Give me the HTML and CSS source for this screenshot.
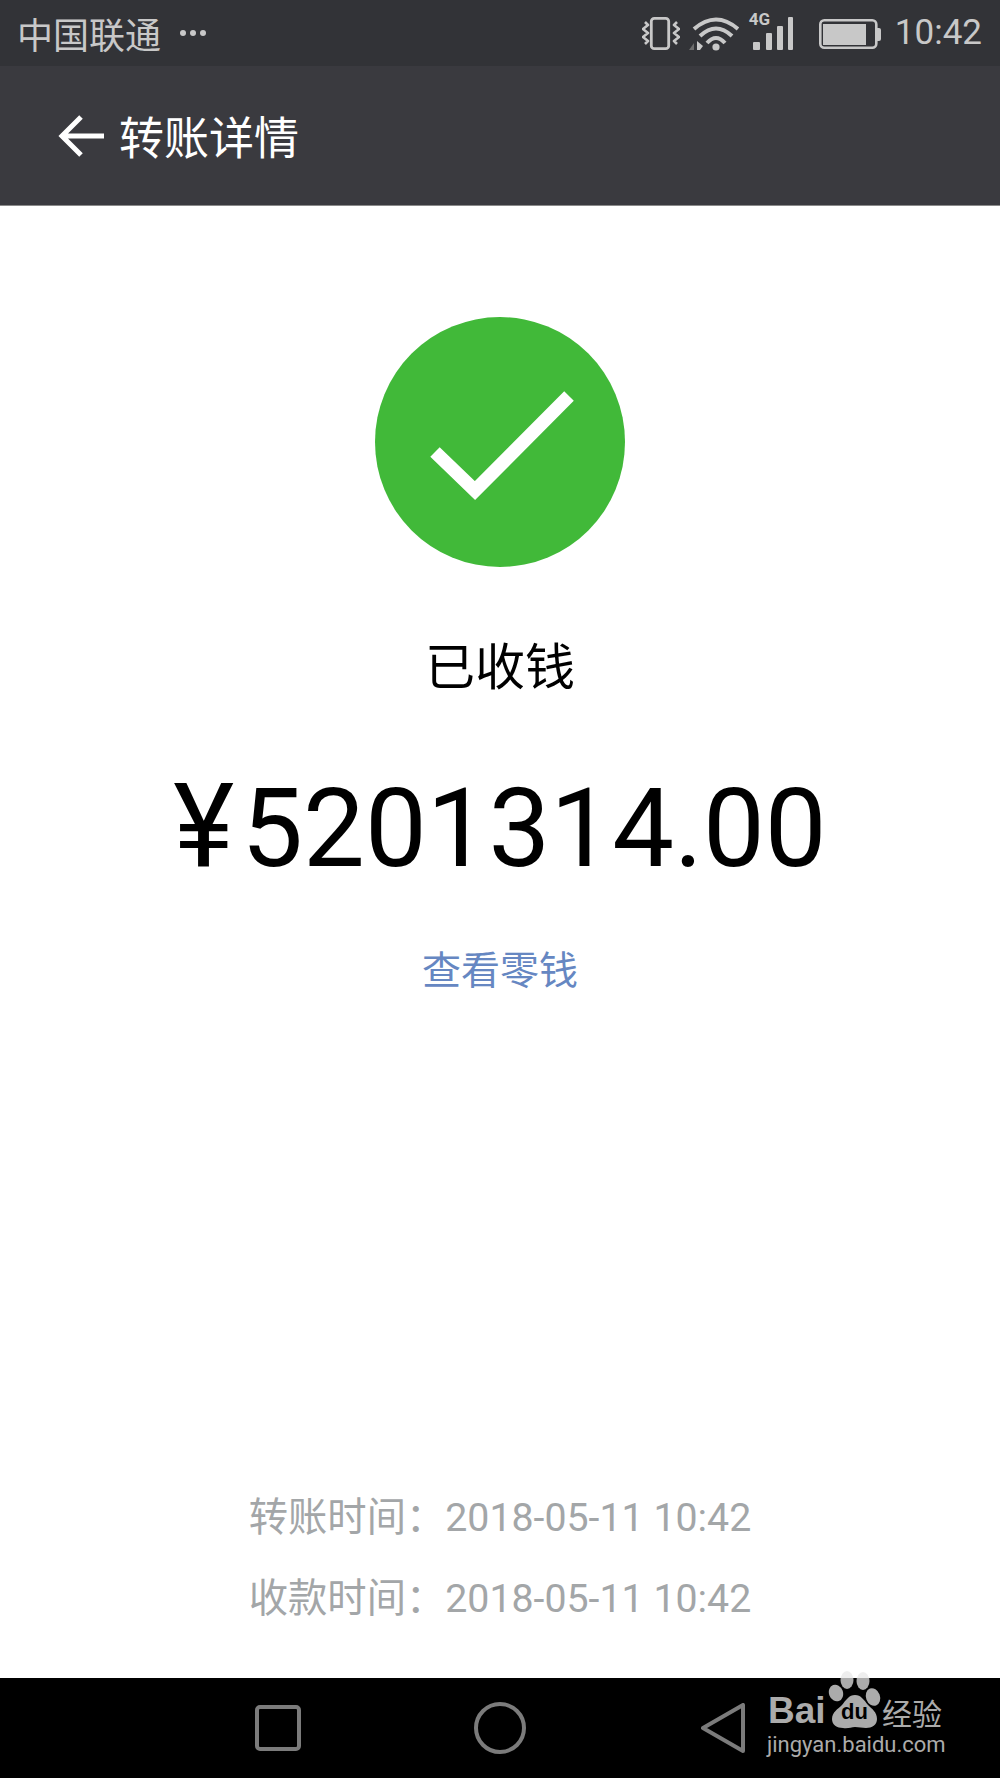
FILE: index.html
```html
<!DOCTYPE html>
<html lang="zh">
<head>
<meta charset="utf-8">
<title>转账详情</title>
<link rel="stylesheet" href="styles.css">
</head>
<body>
<div class="phone">
  <header class="status">
    <div class="carrier"><span>中国联通</span><span class="dots"><i></i><i></i><i></i></span></div>
    <div class="status-right">
      <svg class="ic-vib" width="38" height="40" viewBox="0 0 38 40" fill="none" stroke="#c8c8c8">
        <rect x="9.3" y="5.3" width="17.4" height="30.4" rx="3" stroke-width="2.800"/>
        <path d="M3 9l3 3-5 4 5 4-5 4 5 4-3 3M35 9l-3 3 5 4-5 4 5 4-5 4 3 3" stroke-width="2.600" stroke-linejoin="round"/>
      </svg>
      <svg class="ic-wifi" width="50" height="40" viewBox="0 0 50 40" fill="none" stroke="#c8c8c8" stroke-width="4">
        <path d="M5 16Q27-3 49 16M11 23q16-15 32 0M18 30q9-10 18 0"/>
        <circle cx="27" cy="34" r="3.6" fill="#c8c8c8" stroke="none"/>
        <path d="M0 37l5-7v7z" fill="#6c6c6c" stroke="none"/>
        <path d="M8 37v-9l6 5-3 4z" fill="#c8c8c8" stroke="none"/>
      </svg>
      <div class="signal">
        <span class="net">4G</span>
        <svg width="46" height="40" viewBox="0 0 46 40" fill="#c8c8c8">
          <rect x="4" y="29" width="7" height="8" rx="1"/>
          <rect x="17" y="20" width="6" height="17" rx="1"/>
          <rect x="28" y="13" width="6" height="24" rx="1"/>
          <rect x="39" y="4" width="5" height="33" rx="1"/>
        </svg>
      </div>
      <svg class="ic-batt" width="62" height="40" viewBox="0 0 62 40" fill="none">
        <rect x="1.3" y="7.3" width="56" height="27.4" rx="4" stroke="#c8c8c8" stroke-width="2.6"/>
        <rect x="4" y="11" width="43" height="21" fill="#c8c8c8"/>
        <path d="M58 15h2a2 2 0 0 1 2 2v9a2 2 0 0 1-2 2h-2z" fill="#c8c8c8"/>
      </svg>
      <span class="clock">10:42</span>
    </div>
  </header>

  <nav class="toolbar">
    <svg class="back" width="48" height="44" viewBox="0 0 48 44" fill="none" stroke="#fff" stroke-width="5">
      <path d="M47 22H5M24 3L5 22l19 19"/>
    </svg>
    <h1 class="title">转账详情</h1>
  </nav>

  <main class="content">
    <svg class="ok" width="250" height="250" viewBox="0 0 250 250">
      <circle cx="125" cy="125" r="125" fill="#41b939"/>
      <path d="M60 135l40 38.500 94-94.500" fill="none" stroke="#fff" stroke-width="13.500" stroke-linejoin="miter"/>
    </svg>
    <div class="state">已收钱</div>
    <div class="amount"><span class="yen">¥</span>5201314.00</div>
    <a class="link">查看零钱</a>
    <div class="times">
      <div class="time">转账时间：2018-05-11 10:42</div>
      <div class="time">收款时间：2018-05-11 10:42</div>
    </div>
  </main>

  <footer class="navbar">
    <svg class="nav-ic" width="46" height="46" viewBox="0 0 46 46" fill="none" stroke="#7b7b7b" stroke-width="4">
      <rect x="2" y="2" width="42" height="42" rx="3"/>
    </svg>
    <svg class="nav-ic" width="52" height="52" viewBox="0 0 52 52" fill="none" stroke="#7b7b7b" stroke-width="4">
      <circle cx="26" cy="26" r="24"/>
    </svg>
    <svg class="nav-ic" width="44" height="50" viewBox="0 0 44 50" fill="none" stroke="#7b7b7b" stroke-width="4" stroke-linejoin="round">
      <path d="M42 2v46L2 25z"/>
    </svg>
    <div class="mark">
      <svg class="paw" width="60" height="70" viewBox="0 0 60 70" fill="#ababab">
        <ellipse cx="19" cy="15" rx="6.500" ry="9"/>
        <ellipse cx="35" cy="16" rx="6.500" ry="9"/>
        <ellipse cx="8" cy="28" rx="7" ry="8.500" transform="rotate(-20 8 28)"/>
        <ellipse cx="45" cy="32" rx="7" ry="9" transform="rotate(-20 45 32)"/>
        <path d="M27 30c6 0 9 5 13 10 4 4 9 7 9 14 0 6-5 9-11 9-4 0-7-1-11-1s-7 2-12 1C9 63 4 60 4 54c0-7 6-10 10-14 4-5 7-10 13-10z"/>
        <rect x="0" y="0" width="60" height="13" fill="#fff" fill-opacity=".8"/>
      </svg>
      <span class="bai">Bai</span>
      <span class="du">du</span>
      <span class="jy">经验</span>
      <span class="mark-url">jingyan.baidu.com</span>
    </div>
  </footer>
</div>
</body>
</html>
```

FILE: styles.css
```css
* { box-sizing: border-box; }
html, body { margin: 0; padding: 0; }
body { width: 1000px; height: 1778px; background: #fff; font-family: "Noto Sans CJK SC", Roboto, sans-serif; overflow: hidden; }
.phone { width: 1000px; height: 1778px; display: flex; flex-direction: column; }

.status { height: 66px; background: #323337; display: flex; align-items: center; justify-content: space-between; padding: 0 18px 0 17px; color: #c8c8c8; }
.carrier { display: flex; align-items: center; font-size: 36px; line-height: 64px; height: 64px; }
.dots { display: flex; gap: 4px; margin-left: 19px; }
.dots i { width: 6px; height: 6px; border-radius: 50%; background: #c8c8c8; }
.status-right { display: flex; align-items: center; }
.ic-vib { margin-right: 9px; }
.ic-wifi { margin-right: 10px; }
.signal { position: relative; width: 46px; height: 40px; margin-right: 24px; }
.signal svg { display: block; }
.net { position: absolute; left: 0; top: 0; font: 700 17px/12px Roboto, sans-serif; }
.ic-batt { margin-right: 14px; }
.clock { font: 400 35px/66px Roboto, sans-serif; }

.toolbar { height: 140px; background: #3a3a3f; border-bottom: 1px solid #8a8a8a; display: flex; align-items: center; padding: 0 0 0 57px; }
.back { margin-right: 14px; }
.title { margin: 0; font-size: 45px; font-weight: 400; color: #fff; line-height: 60px; }

.content { flex: 1; display: flex; flex-direction: column; align-items: center; padding-top: 111px; }
.ok { display: block; }
.state { margin-top: 61px; font-size: 50px; line-height: 70px; color: #000; }
.amount { margin-top: 66px; font: 400 110px/130px Roboto, sans-serif; color: #000; }
.yen { font-size: 116px; line-height: 0; letter-spacing: 7px; }
.link { margin-top: 45px; font-size: 39px; line-height: 56px; color: #6687c2; }
.times { margin-top: auto; padding-bottom: 38px; }
.time { font: 400 39.300px/81px Roboto, "Noto Sans CJK SC", sans-serif; color: #a3a6a8; text-align: center; }

.navbar { position: relative; height: 100px; background: #000; display: flex; align-items: center; padding-left: 255px; }
.nav-ic:nth-child(1) { margin-right: 173px; }
.nav-ic:nth-child(2) { margin-right: 175px; }
.mark { position: absolute; left: 760px; top: -13px; width: 200px; height: 105px; color: #ababab; }
.paw { position: absolute; left: 68px; top: 0; }
.bai { position: absolute; left: 8px; top: 29px; font: 700 37px/34px "Liberation Sans", sans-serif; }
.du { position: absolute; left: 81px; top: 36px; font: 700 22px/22px "Liberation Sans", sans-serif; color: #000; }
.jy { position: absolute; left: 122px; top: 29px; font-size: 30px; line-height: 36px; }
.mark-url { position: absolute; left: 7px; top: 66px; font: 400 22px/28px Roboto, sans-serif; }
```
